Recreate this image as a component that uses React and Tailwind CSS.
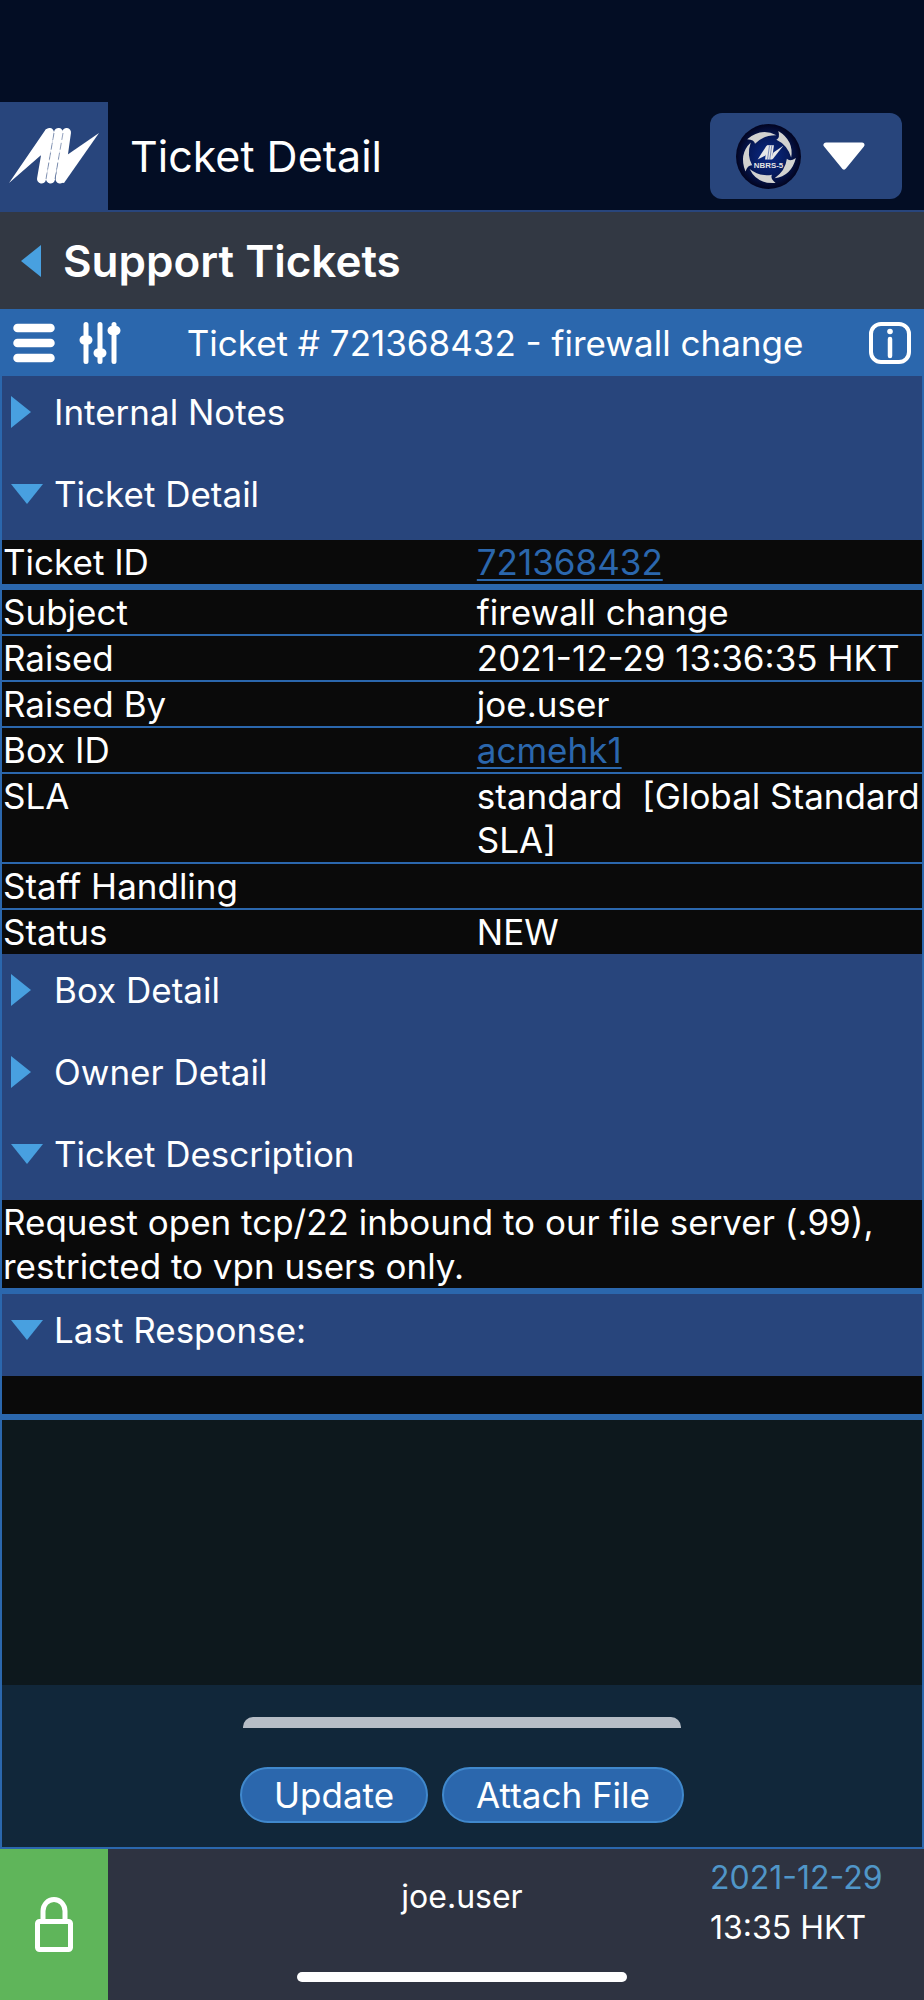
import React from "react";

const details = [
  { label: "Ticket ID", value: "721368432", link: true },
  { label: "Subject", value: "firewall change" },
  { label: "Raised", value: "2021-12-29 13:36:35 HKT" },
  { label: "Raised By", value: "joe.user" },
  { label: "Box ID", value: "acmehk1", link: true },
  { label: "SLA", value: "standard\u00a0 [Global Standard SLA]" },
  { label: "Staff Handling", value: "" },
  { label: "Status", value: "NEW" },
];

function Logo() {
  return (
    <svg viewBox="0 0 108 108" className="size-[108px]" aria-hidden="true">
      <path fill="#fff" d="M9 81 L46 27 L52 28 L46 50 L40 54 Z" />
      <path fill="#fff" d="M99 31 L64 81 L58 80 L62 58 L67 53 Z" />
      <g stroke="#fff" strokeWidth="9" strokeLinecap="round" fill="none">
        <path d="M49.500 30.500 L41.500 77" />
        <path d="M58.500 30.500 L50.500 77" />
        <path d="M66.500 30.500 L60 77" />
      </g>
      <g stroke="#28457c" strokeWidth="1" strokeDasharray="7 3" opacity="0.5" fill="none">
        <path d="M54 31 L46 77" />
        <path d="M63 31 L55 77" />
      </g>
    </svg>
  );
}

function Badge() {
  return (
    <svg viewBox="0 0 66 66" className="size-[65px]" aria-hidden="true">
      <defs>
        <radialGradient id="badge">
          <stop offset="0" stopColor="#0b2a86" />
          <stop offset="0.6" stopColor="#061a5c" />
          <stop offset="1" stopColor="#020420" />
        </radialGradient>
      </defs>
      <circle cx="33" cy="33" r="33" fill="url(#badge)" />
      {[0, 72, 144, 216, 288].map((a) => (
        <path
          key={a}
          fill="#d2d2d0"
          transform={`rotate(${a} 33 33)`}
          d="M43 7 Q59 17 56 34 Q52 21 41 16 Q45 14 43 7 Z"
        />
      ))}
      <g fill="#e8e8e8">
        <path d="M22 36 L31 22 L34 22 L30 32 Z" />
        <path d="M48 22 L37 36 L36 34 L38 29 Z" />
        <path d="M31.500 21.500 H38.500 L36.500 36 H29.500 Z" />
      </g>
      <path d="M34 22 L32 36 M36.300 22 L34.300 36" stroke="#0b2a86" strokeWidth="0.5" />
      <text
        x="33"
        y="45"
        textAnchor="middle"
        fill="#e4e4e4"
        fontSize="8"
        fontWeight="700"
        fontFamily="Liberation Sans, sans-serif"
      >
        NBRS-5
      </text>
    </svg>
  );
}

function Arrow({ open }) {
  return (
    <span className="flex w-8 shrink-0">
      {open ? (
        <svg viewBox="0 0 32 20" className="h-5 w-8" aria-hidden="true">
          <path fill="#48a0e0" d="M0 0 H32 L16 20 Z" />
        </svg>
      ) : (
        <svg viewBox="0 0 20 32" className="h-8 w-5" aria-hidden="true">
          <path fill="#48a0e0" d="M0 0 V32 L20 16 Z" />
        </svg>
      )}
    </span>
  );
}

function Section({ title, open }) {
  return (
    <h2>
      <button
        type="button"
        aria-expanded={!!open}
        className="flex h-[82px] w-full items-center gap-[11px] bg-[#28457c] pb-2.5 pl-[9px] text-left"
      >
        <Arrow open={open} />
        <span>{title}</span>
      </button>
    </h2>
  );
}

export default function App() {
  return (
    <div className="flex min-h-screen flex-col bg-[#030d24] font-['Inter',sans-serif] text-[35px] leading-[44px] text-white">
      <header className="mt-[102px] flex h-[110px] items-center border-b-2 border-[#28457c]">
        <a href="#home" aria-label="Home" className="h-full w-[108px] bg-[#28457c]">
          <Logo />
        </a>
        <h1 className="flex-1 pl-[22px] text-[43px]">Ticket Detail</h1>
        <button
          type="button"
          aria-label="Switch account"
          className="mr-[22px] flex h-[86px] w-48 items-center gap-[22px] rounded-xl bg-[#28457c] pl-[26px]"
        >
          <Badge />
          <svg viewBox="0 0 42 28" className="h-7 w-[42px]" aria-hidden="true">
            <path
              d="M3 3 H39 L21 25 Z"
              fill="#fff"
              stroke="#fff"
              strokeWidth="5"
              strokeLinejoin="round"
            />
          </svg>
        </button>
      </header>

      <nav className="flex h-[97px] items-center bg-[#323843]">
        <a href="#tickets" className="flex items-center gap-[22px] pl-[21px] text-[44px] font-semibold">
          <svg viewBox="0 0 20 32" className="h-8 w-5" aria-hidden="true">
            <path fill="#48a0e0" d="M20 0 V32 L0 16 Z" />
          </svg>
          Support Tickets
        </a>
      </nav>

      <main className="flex flex-1 flex-col border-x-2 border-b-2 border-[#2b67ad]">
        <div className="flex h-[67px] items-center bg-[#2b67ad] px-[11px]">
          <div className="flex w-28 shrink-0 gap-6">
            <button type="button" aria-label="Menu">
              <svg viewBox="0 0 42 42" className="size-[42px]" stroke="#fff" strokeWidth="8.5" strokeLinecap="round" aria-hidden="true">
                <path d="M4.500 6 H37.500 M4.500 21 H37.500 M4.500 36 H37.500" />
              </svg>
            </button>
            <button type="button" aria-label="Filters">
              <svg viewBox="0 0 42 42" className="size-[42px]" stroke="#fff" strokeLinecap="round" aria-hidden="true">
                <path strokeWidth="5" d="M7 2.500 V39.500 M21 2.500 V39.500 M35 2.500 V39.500" />
                <path strokeWidth="9" d="M5 18 H9 M19 31 H23 M33 8.500 H37" />
              </svg>
            </button>
          </div>
          <p className="flex-1 text-center">Ticket # 721368432 - firewall change</p>
          <button type="button" aria-label="Information" className="ml-1">
            <svg viewBox="0 0 42 42" className="size-[42px]" fill="none" stroke="#fff" aria-hidden="true">
              <rect x="2" y="2" width="38" height="38" rx="10" strokeWidth="4" />
              <path d="M21 17 V34" strokeWidth="4.500" strokeLinecap="round" />
              <circle cx="21" cy="9.500" r="2.800" fill="#fff" stroke="none" />
            </svg>
          </button>
        </div>

        <Section title="Internal Notes" />
        <Section title="Ticket Detail" open />
        <table className="w-full table-fixed bg-[#0a0a0a]">
          <tbody>
            {details.map((row, i) => (
              <tr
                key={row.label}
                className={
                  i === 0
                    ? "border-b-6 border-[#2b67ad]"
                    : i === details.length - 1
                      ? ""
                      : "border-b-2 border-[#2b67ad]"
                }
              >
                <th scope="row" className="w-[51.5%] p-0 pl-px text-left align-top font-normal">
                  {row.label}
                </th>
                <td className="p-0 pl-px align-top">
                  {row.link ? (
                    <a href={`#${row.value}`} className="text-[#2b67ad] underline decoration-2 underline-offset-4">
                      {row.value}
                    </a>
                  ) : (
                    row.value
                  )}
                </td>
              </tr>
            ))}
          </tbody>
        </table>
        <Section title="Box Detail" />
        <Section title="Owner Detail" />
        <Section title="Ticket Description" open />
        <p className="border-b-6 border-[#2b67ad] bg-[#0a0a0a] px-px">
          Request open tcp/22 inbound to our file server (.99), restricted to vpn users only.
        </p>
        <Section title="Last Response:" open />
        <div className="h-11 border-b-6 border-[#2b67ad] bg-[#0a0a0a]" />
        <div className="flex-1 bg-[#0d181d]" />

        <div className="flex flex-col items-center bg-[#11273a] pt-8 pb-6">
          <div className="h-[11px] w-[438px] rounded-t-[10px] bg-[#b6bdc6]" />
          <div className="mt-[39px] flex gap-[14px]">
            <button type="button" className="h-14 rounded-full border-2 border-[#4088cc] bg-[#2b67ad] px-8">
              Update
            </button>
            <button type="button" className="h-14 rounded-full border-2 border-[#4088cc] bg-[#2b67ad] px-8">
              Attach File
            </button>
          </div>
        </div>
      </main>

      <footer className="grid h-[151px] grid-cols-[214px_1fr_214px] bg-[#2e3341] text-[32px]">
        <div className="flex w-[108px] items-center justify-center bg-[#5fb55a]">
          <svg viewBox="0 0 38 56" className="h-14 w-[38px]" fill="none" stroke="#fff" strokeWidth="5" role="img" aria-label="Secure">
            <rect x="2.500" y="24.500" width="33" height="28" rx="2" />
            <path d="M8 24 V14 A11 11.500 0 0 1 30 14 V24" />
          </svg>
        </div>
        <div className="flex flex-col items-center justify-between pt-[26px] pb-[18px]">
          <p>joe.user</p>
          <div className="h-[10px] w-[330px] rounded-full bg-white" />
        </div>
        <div className="pt-1 leading-[50px]">
          <p className="text-[#5096c8]">2021-12-29</p>
          <p>13:35 HKT</p>
        </div>
      </footer>
    </div>
  );
}
